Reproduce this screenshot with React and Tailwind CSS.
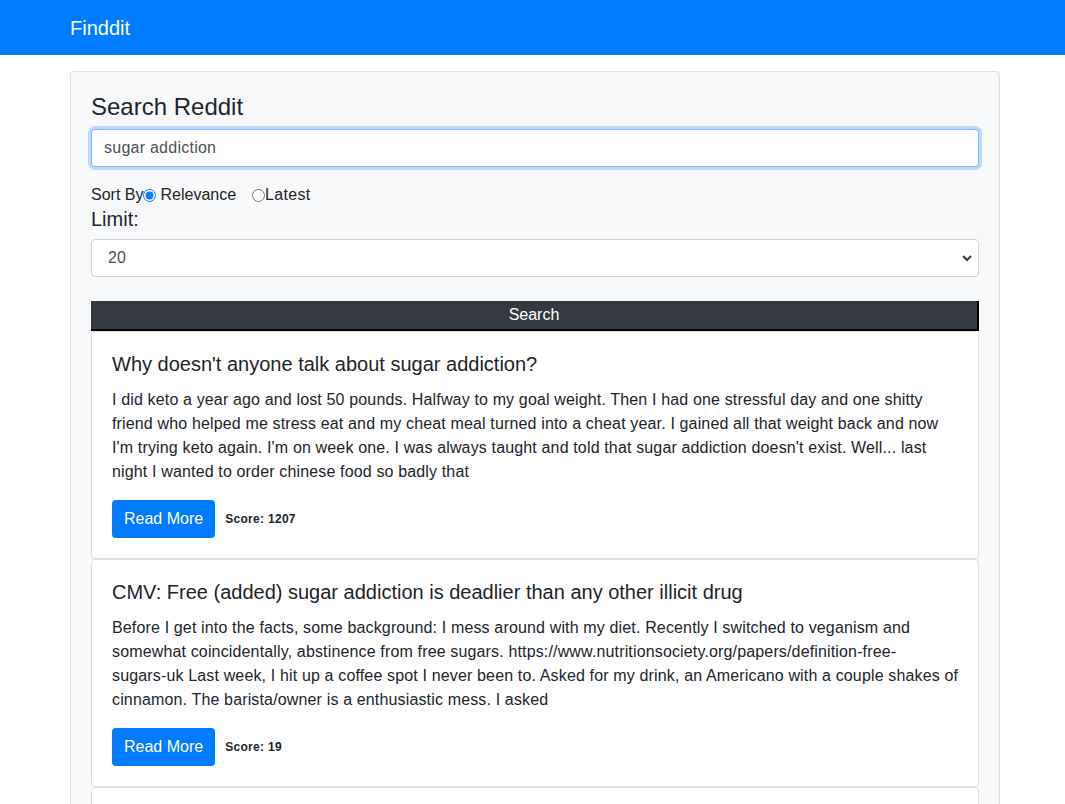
import { useState } from "react";

// text kept in the lines the reference shows
const posts = [
  {
    title: "Why doesn't anyone talk about sugar addiction?",
    lines: [
      "I did keto a year ago and lost 50 pounds. Halfway to my goal weight. Then I had one stressful day and one shitty",
      "friend who helped me stress eat and my cheat meal turned into a cheat year. I gained all that weight back and now",
      "I'm trying keto again. I'm on week one. I was always taught and told that sugar addiction doesn't exist. Well... last",
      "night I wanted to order chinese food so badly that",
    ],
    score: 1207,
  },
  {
    title: "CMV: Free (added) sugar addiction is deadlier than any other illicit drug",
    lines: [
      "Before I get into the facts, some background: I mess around with my diet. Recently I switched to veganism and",
      "somewhat coincidentally, abstinence from free sugars. https://www.nutritionsociety.org/papers/definition-free-",
      "sugars-uk Last week, I hit up a coffee spot I never been to. Asked for my drink, an Americano with a couple shakes of",
      "cinnamon. The barista/owner is a enthusiastic mess. I asked",
    ],
    score: 19,
  },
  {
    title: "Sugar addiction is real and I need help quitting",
    lines: [
      "I have been trying to cut sugar for months now and every time I think I have it under control, I end up eating",
      "an entire box of cookies at midnight. Does anyone have tips that actually worked for them?",
    ],
    score: 12,
  },
];

function App() {
  const [query, setQuery] = useState("sugar addiction");
  const [sort, setSort] = useState("relevance");
  const [limit, setLimit] = useState("20");

  return (
    <div className="min-h-screen bg-white text-[#212529] font-['Liberation_Sans',Arial,sans-serif]">
      {/* Navbar */}
      <nav className="h-[55px] bg-[#007bff] flex items-center">
        <div className="ml-[70px] w-[930px]">
          <span className="text-[20px] text-white">Finddit</span>
        </div>
      </nav>

      <div className="ml-[70px] w-[930px] mt-4">
        <div className="bg-[#f7f8f9] border border-[#dfdfdf] rounded p-5">
          <h4 className="text-[24px] leading-[29px] mb-2">Search Reddit</h4>
          <input
            value={query}
            onChange={(e) => setQuery(e.target.value)}
            className="w-full h-[38px] bg-white border border-[#80bdff] rounded px-3 text-[16px] tracking-[0.25px] text-[#495057] shadow-[0_0_0_3px_rgba(0,123,255,0.25)] outline-none"
          />

          <div className="mt-4 flex items-center text-[16px] leading-6">
            <span>Sort By</span>
            <label className="flex items-center">
              <input
                type="radio"
                name="sort"
                checked={sort === "relevance"}
                onChange={() => setSort("relevance")}
                className="m-0 w-[13px] h-[13px] accent-[#0a7cff]"
              />
              <span className="ml-1">Relevance</span>
            </label>
            <label className="flex items-center ml-4">
              <input
                type="radio"
                name="sort"
                checked={sort === "latest"}
                onChange={() => setSort("latest")}
                className="m-0 w-[13px] h-[13px]"
              />
              <span className="tracking-[0.3px]">Latest</span>
            </label>
          </div>

          <label className="block text-[20px] leading-6 mt-0 mb-2">Limit:</label>
          <div className="relative">
            <select
              value={limit}
              onChange={(e) => setLimit(e.target.value)}
              className="w-full h-[38px] bg-white border border-[#ced4da] rounded pl-4 text-[16px] text-[#495057] appearance-none outline-none"
            >
              <option value="5">5</option>
              <option value="10">10</option>
              <option value="20">20</option>
              <option value="50">50</option>
            </select>
            <svg
              className="absolute right-[6px] top-[14px] pointer-events-none"
              width="12"
              height="10"
              viewBox="0 0 12 10"
            >
              <path d="M2 3l4 4 4-4" fill="none" stroke="#343a40" strokeWidth="2" />
            </svg>
          </div>

          <button className="mt-6 w-full h-[30px] bg-[#343a40] text-white text-[16px] border-r-2 border-b-2 border-black">
            Search
          </button>

          <div>
            {posts.map((post, i) => (
              <div key={i} className="bg-white border border-[#dfdfdf] rounded p-5">
                <h5 className="text-[20px] leading-6 mb-3">{post.title}</h5>
                <p className="text-[16px] leading-6 tracking-[0.15px] mb-4 whitespace-nowrap">
                  {post.lines.map((line, j) => (
                    <span key={j} className="block">
                      {line}
                    </span>
                  ))}
                </p>
                <div className="flex items-center">
                  <button className="h-[38px] px-3 bg-[#007bff] text-white text-[16px] rounded">
                    Read More
                  </button>
                  <span className="ml-[10px] text-[12px] tracking-[0.3px] font-bold">
                    Score: {post.score}
                  </span>
                </div>
              </div>
            ))}
          </div>
        </div>
      </div>
    </div>
  );
}

export default App;
